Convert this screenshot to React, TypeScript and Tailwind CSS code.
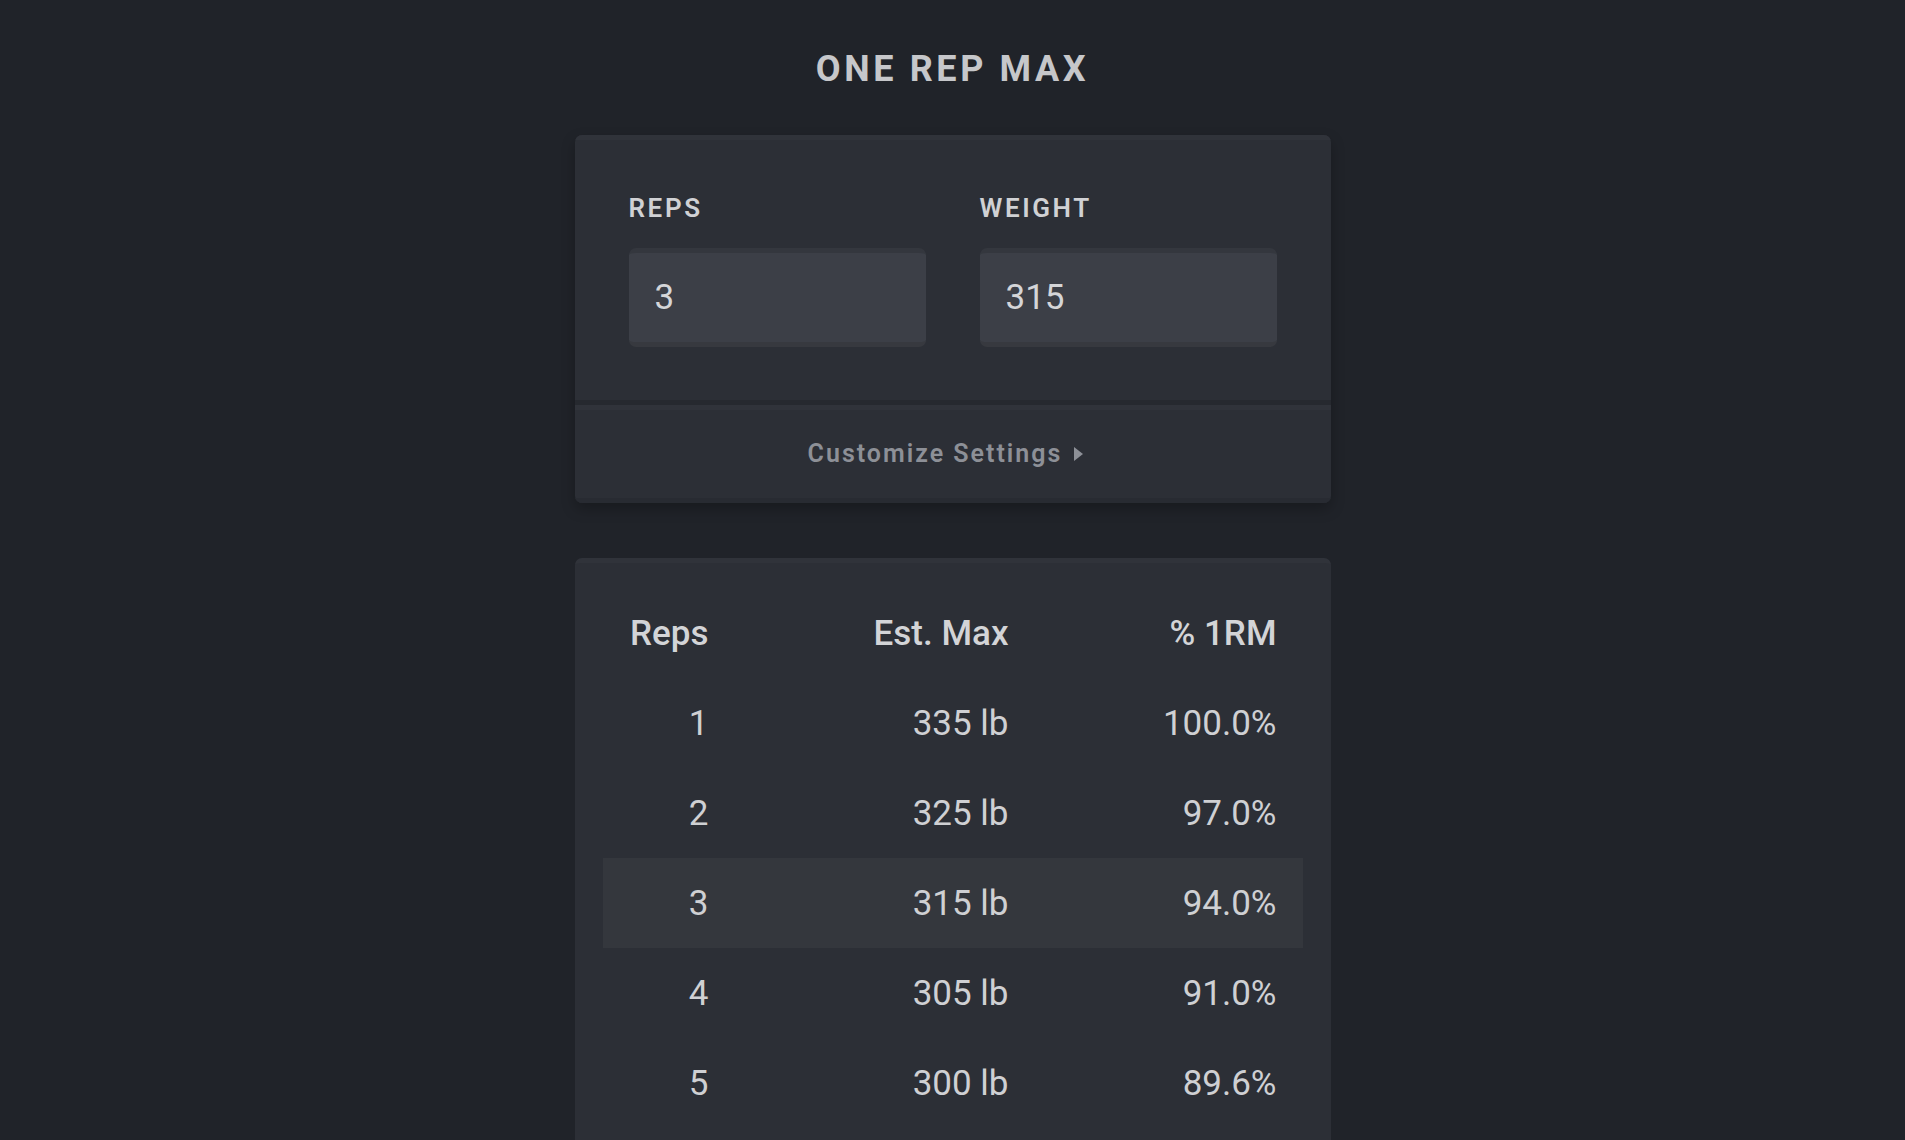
import { useState } from 'react';

// 1RM 估算表:每行 = 次数 / 估算重量 / 占 1RM 百分比
const ROWS: { reps: number; max: number; pct: string }[] = [
  { reps: 1, max: 335, pct: '100.0%' },
  { reps: 2, max: 325, pct: '97.0%' },
  { reps: 3, max: 315, pct: '94.0%' },
  { reps: 4, max: 305, pct: '91.0%' },
  { reps: 5, max: 300, pct: '89.6%' }
];

function Field({ label, value, onChange }: { label: string; value: string; onChange: (v: string) => void }) {
  return (
    <label className="flex flex-col">
      <span className="mb-[25px] text-[26px] leading-[30px] font-semibold tracking-[0.1em] text-[#d0d1d4]">
        {label}
      </span>
      <input
        value={value}
        onChange={(e) => onChange(e.target.value)}
        className="h-[99px] rounded-[7px] border-t-[5px] border-b-[5px] border-t-[#34373e] border-b-[#37393f] bg-[#3c3f47] px-[26px] text-[35px] leading-none text-[#d4d5d8] outline-none"
      />
    </label>
  );
}

export default function App() {
  const [reps, setReps] = useState('3');
  const [weight, setWeight] = useState('315');

  return (
    <div className="h-screen overflow-hidden bg-[#202329] font-['Roboto','Noto_Sans',sans-serif]">
      <h1 className="pt-[49px] text-center text-[36px] leading-[40px] font-bold tracking-[0.1em] text-[#c6c7ca]">
        ONE REP MAX
      </h1>

      {/* 输入卡片 */}
      <div className="mx-auto mt-[46px] w-[756px] overflow-hidden rounded-[7px] bg-[#2c2f36] shadow-[0_6px_14px_rgba(0,0,0,0.25)]">
        <div className="border-t-[5px] border-b-[5px] border-t-[#30333a] border-b-[#26292f] px-[54px] pt-[53px] pb-[53px]">
          <div className="grid grid-cols-2 gap-x-[54px]">
            <Field label="REPS" value={reps} onChange={setReps} />
            <Field label="WEIGHT" value={weight} onChange={setWeight} />
          </div>
        </div>
        <button
          type="button"
          className="flex h-[98px] w-full items-center justify-center border-t-[5px] border-b-[5px] border-t-[#30333a] border-b-[#282b32] pr-[14px] text-[25px] font-semibold tracking-[0.08em] text-[#8d9097]"
        >
          Customize Settings
          <svg width="9" height="14" viewBox="0 0 9 14" className="ml-[12px]">
            <polygon points="0,0 9,7 0,14" fill="#8d9097" />
          </svg>
        </button>
      </div>

      {/* 结果表 */}
      <div className="mx-auto mt-[55px] w-[756px] rounded-[7px] border-t-[5px] border-t-[#30333a] bg-[#2c2f36] px-[28px] pt-[25px] pb-[60px]">
        <div className="grid h-[90px] grid-cols-[80px_300px_1fr] items-center px-[26px] text-right text-[35px] leading-none font-medium text-[#d3d4d7]">
          <span>Reps</span>
          <span>Est. Max</span>
          <span>% 1RM</span>
        </div>
        {ROWS.map((r) => (
          <div
            key={r.reps}
            className={`grid h-[90px] grid-cols-[80px_300px_1fr] items-center px-[26px] text-right text-[35px] leading-none text-[#cfd0d3] ${
              String(r.reps) === reps ? 'bg-[#34373d]' : ''
            }`}
          >
            <span>{r.reps}</span>
            <span>{r.max} lb</span>
            <span>{r.pct}</span>
          </div>
        ))}
      </div>
    </div>
  );
}
